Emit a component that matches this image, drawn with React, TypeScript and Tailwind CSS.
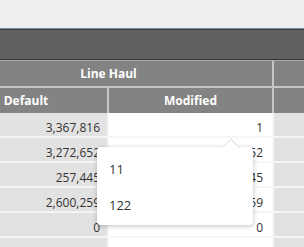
const rows = [
  { def: "3,367,816", mod: "1" },
  { def: "3,272,652", mod: "3,272,652" },
  { def: "257,445", mod: "257,445" },
  { def: "2,600,259", mod: "2,600,259" },
  { def: "0", mod: "0" },
  { def: "", mod: "" },
];

const options = ["11", "122"];

export default function App() {
  return (
    <div
      className="relative h-[247px] w-[304px] overflow-hidden bg-[#eeeeee]"
      style={{ fontFamily: '"Open Sans", "Noto Sans", sans-serif' }}
    >
      <div className="h-[28px]" />
      <div className="h-[1px] bg-[#6f8aa6]" />
      <div className="h-[1px] bg-[#3b4148]" />
      <div className="h-[29px] bg-[#616161]" />
      <div className="h-[1px] bg-[#2f3a44]" />

      {/* grid, first column starts off screen */}
      <div className="-ml-[55px] w-[560px]">
        <div className="grid grid-cols-[162px_163px_231px] gap-[2px] border-t border-[#a9a9a9] bg-[#c6c6c6]">
          <div className="col-span-2 flex h-[25px] items-center justify-center bg-[#838383] text-[12px] font-bold text-white">
            Line Haul
          </div>
          <div className="bg-[#838383]" />
          <div className="flex h-[25px] items-center justify-center bg-[#838383] text-[12px] font-bold text-white">
            Default
          </div>
          <div className="flex h-[25px] items-center justify-center bg-[#838383] text-[12px] font-bold text-white">
            Modified
          </div>
          <div className="bg-[#838383]" />
        </div>

        <div className="grid grid-cols-[162px_163px_231px] gap-[2px] bg-[#f6f6f6]">
          {rows.map((r, i) => (
            <div key={i} className="contents">
              <div className="flex h-[23px] items-center justify-end bg-[#e3e2e2] pr-[7px] pt-[6px] text-[12px] text-[#333333]">
                {r.def}
              </div>
              <div className="flex h-[23px] items-center justify-end bg-white pr-[9px] pt-[6px] text-[12px] text-[#333333]">
                {r.mod}
              </div>
              <div className="h-[23px] bg-[#e3e2e2]" />
            </div>
          ))}
        </div>
      </div>

      {/* dropdown */}
      <div className="absolute left-[97px] top-[147px] h-[78px] w-[156px] rounded-[4px] bg-white py-[5px] shadow-[0_1px_5px_rgba(0,0,0,0.25)]">
        <div className="absolute -top-[6px] left-[128px] h-[12px] w-[12px] rotate-45 border-l border-t border-[#e2e2e2] bg-white" />
        {options.map((o) => (
          <div key={o} className="relative flex h-[36px] items-center pl-[12px] text-[13px] text-[#333333]">
            {o}
          </div>
        ))}
      </div>
    </div>
  );
}
